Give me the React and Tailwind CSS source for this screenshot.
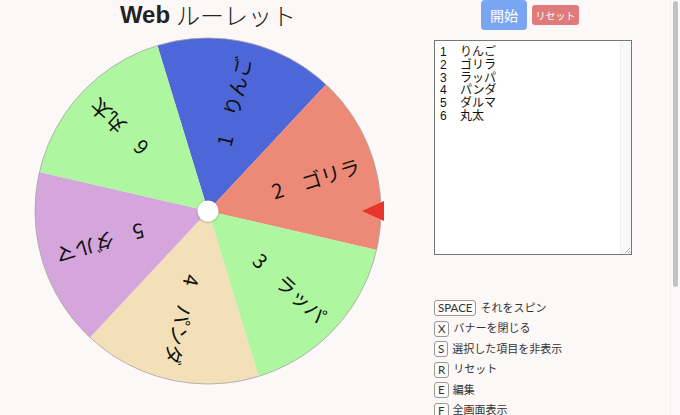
const items = [
  { n: 1, label: "りんご", color: "#4d67d8" },
  { n: 2, label: "ゴリラ", color: "#ec8977" },
  { n: 3, label: "ラッパ", color: "#aef6a0" },
  { n: 4, label: "パンダ", color: "#f3dfb8" },
  { n: 5, label: "ダルマ", color: "#d4a6dc" },
  { n: 6, label: "丸太", color: "#aef6a0" },
];

const shortcuts = [
  ["SPACE", "それをスピン"],
  ["X", "バナーを閉じる"],
  ["S", "選択した項目を非表示"],
  ["R", "リセット"],
  ["E", "編集"],
  ["F", "全画面表示"],
];

const CX = 175;
const CY = 175;
const R = 173;

function pt(deg) {
  const a = (deg * Math.PI) / 180;
  return [CX + R * Math.cos(a), CY + R * Math.sin(a)];
}

function Wheel() {
  return (
    <svg width="356" height="350" className="ml-[33px] block shrink-0">
      <defs>
        <filter id="hub" x="-50%" y="-50%" width="200%" height="200%">
          <feDropShadow dx="0" dy="0.5" stdDeviation="1" floodColor="#000" floodOpacity="0.35" />
        </filter>
      </defs>
      {items.map((it, i) => {
        const s = -107 + i * 60;
        const [x1, y1] = pt(s);
        const [x2, y2] = pt(s + 60);
        return (
          <path
            key={it.n}
            d={`M${CX} ${CY} L${x1} ${y1} A${R} ${R} 0 0 1 ${x2} ${y2} Z`}
            fill={it.color}
          />
        );
      })}
      <circle cx={CX} cy={CY} r={R} fill="none" stroke="#a9a3a3" strokeWidth="0.8" />
      {items.map((it, i) => (
        <text
          key={it.n}
          transform={`translate(${CX} ${CY}) rotate(${-77 + i * 60})`}
          x="158"
          textAnchor="end"
          dominantBaseline="central"
          fontSize="20"
          fill="#111"
          style={{ fontFamily: '"Noto Sans CJK JP", sans-serif' }}
        >
          {`${it.n}　${it.label}`}
        </text>
      ))}
      <circle cx={CX} cy={CY} r="10.5" fill="#fff" filter="url(#hub)" />
      <polygon points="329,175 351,165 351,185" fill="#e8352b" />
    </svg>
  );
}

export default function App() {
  return (
    <div className="relative flex h-[415px] w-[680px] overflow-hidden bg-[#fcf8f7] font-['Liberation_Sans','Noto_Sans_CJK_JP',sans-serif] text-[#222]">
      <div className="flex w-[416px] shrink-0 flex-col">
        <h1 className="flex h-[36px] shrink-0 justify-center pt-[1px] text-[24px] leading-[28px] text-[#222]">
          <span className="font-bold">Web</span>
          <span className="ml-[6px] font-['Noto_Sans_CJK_JP',sans-serif] font-light">ルーレット</span>
        </h1>
        <Wheel />
      </div>

      <div className="ml-[18px] flex w-[198px] shrink-0 flex-col">
        <div className="flex h-[30px] shrink-0 items-center pl-[47px]">
          <button className="h-[30px] w-[46px] rounded-[4px] bg-[#7aa6f1] text-[14px] text-white font-['Noto_Sans_CJK_JP',sans-serif]">
            開始
          </button>
          <button className="ml-[5px] h-[20px] w-[47px] rounded-[3px] bg-[#e07b7b] text-[10px] text-white font-['Noto_Sans_CJK_JP',sans-serif]">
            リセット
          </button>
        </div>

        <div className="mt-[10px] flex h-[215px] shrink-0 border border-[#767676] bg-white">
          <textarea
            readOnly
            spellCheck={false}
            className="flex-1 resize-none overflow-hidden bg-white px-[5px] pt-[5px] text-[12px] leading-[12.8px] text-[#111] outline-none [tab-size:6]"
            defaultValue={items.map((it) => `${it.n}\t${it.label}`).join("\n")}
          />
          <div className="relative w-[11px] border-l border-[#efefef] bg-[#f8f8f8]">
            <svg className="absolute bottom-0 right-0" width="8" height="8" viewBox="0 0 8 8">
              <path d="M7 2 L2 7 M7 5 L5 7" stroke="#999" strokeWidth="0.8" />
            </svg>
          </div>
        </div>

        <div className="mt-[45px] flex shrink-0 flex-col gap-[4.5px]">
          {shortcuts.map(([k, t]) => (
            <div key={k} className="flex h-[16px] items-center text-[11px] leading-[15px]">
              <kbd className="rounded-[3px] border border-[#9a9a9a] bg-[#fdfbfa] px-[3px] font-['Lato',sans-serif] text-[11.5px] leading-[14px] text-[#333]">
                {k}
              </kbd>
              <span className="ml-[4px] text-[#333]">{t}</span>
            </div>
          ))}
        </div>
      </div>

      <div className="absolute right-0 top-0 h-full w-[10px] border-l border-[#f0eeee] bg-[#faf8f8]">
        <div className="ml-[2px] mt-[1px] h-[286px] w-[5px] rounded-full bg-[#c2c2c2]" />
      </div>
    </div>
  );
}
